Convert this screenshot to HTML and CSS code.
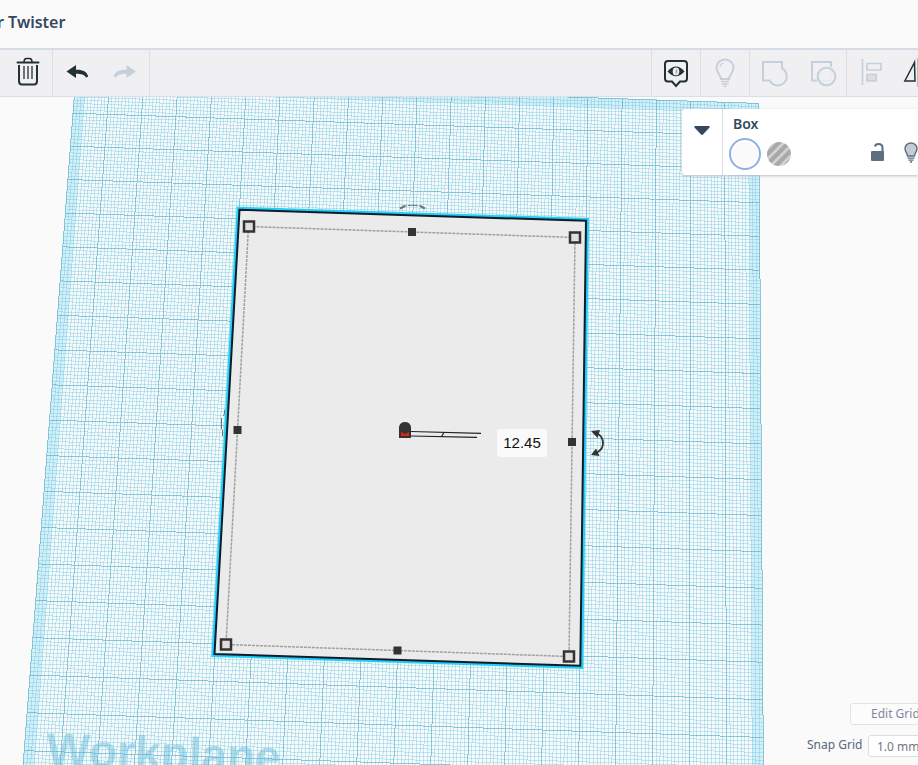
FILE: index.html
```html
<!DOCTYPE html>
<html lang="en">
<head>
<meta charset="utf-8">
<title>Workplane editor</title>
<link rel="stylesheet" href="styles.css">
</head>
<body>
<header class="header"><h1 class="title">r Twister</h1></header>
<nav class="toolbar" aria-label="Tools">
  <div class="group group-first">
    <button class="tool" aria-label="Delete"><svg viewBox="4 50 48 46"><g fill="none" stroke="#243132" stroke-width="2"><path d="M17.500 62.500H38.500" stroke-linecap="round"/><path d="M24 62C24 59.500 25 58.500 26.500 58.500H29.500C31 58.500 32 59.500 32 62" stroke-width="1.500"/><path d="M19 65V81Q19 84.500 22 84.500H34Q37 84.500 37 81V65"/><path d="M24 66V79M28 66V79M32 66V79" stroke-width="1.300"/></g></svg></button>
  </div>
  <div class="group">
    <button class="tool" aria-label="Undo"><svg viewBox="53 50 48 46"><path fill="#243132" d="M66.500 71.500L76 65V69.800C83 69.600 87.500 72 88.200 76.800L86 77.500C84.500 74.500 81 73.700 76 73.700V78Z"/></svg></button>
    <button class="tool" aria-label="Redo" disabled><svg viewBox="101 50 48 46"><path fill="#c5d0da" d="M136 71.500L126.500 65V69.800C119 69.600 114.500 72 113.800 76.800L116 77.500C117.500 74.500 121 73.700 126.500 73.700V78Z"/></svg></button>
  </div>
  <div class="spacer"></div>
  <div class="group group-start">
    <button class="tool" aria-label="Show"><svg viewBox="652 50 48 46"><path d="M668 61H684Q687 61 687 64V78.500Q687 81.500 684 81.500H680L676 86L672 81.500H668Q665 81.500 665 78.500V64Q665 61 668 61Z" fill="none" stroke="#243132" stroke-width="2"/><path d="M667.500 71.500Q676 61.500 684.500 71.500Q676 81 667.500 71.500Z" fill="#243132"/><ellipse cx="676" cy="71.400" rx="3.300" ry="3.900" fill="#f0f0f3"/><path d="M676.500 69.500V73.500" stroke="#9ba3a4" stroke-width="1.500"/></svg></button>
  </div>
  <div class="group">
    <button class="tool" aria-label="Show all" disabled><svg viewBox="701 50 48 46"><g fill="none" stroke="#c5d0da" stroke-width="2"><path d="M721 79C721 75 716.500 73 716.500 67.500A8.500 8 0 0 1 733.500 67.500C733.500 73 729 75 729 79Z"/><path d="M720 67Q720.500 64 723.500 63" stroke-width="1.200"/><path d="M721 81.500H729M721.500 84H728.500M723.500 86.300H726.500" stroke-width="1.500"/></g></svg></button>
  </div>
  <div class="group">
    <button class="tool" aria-label="Group" disabled><svg viewBox="750 50 48 46"><path d="M782 62H763V80.500H769.700A9 9 0 1 0 782 68.500Z" fill="none" stroke="#c5d0da" stroke-width="2"/></svg></button>
    <button class="tool" aria-label="Ungroup" disabled><svg viewBox="798 50 48 46"><g fill="none" stroke="#c5d0da" stroke-width="2"><path d="M831 67V62H812V80.500H817"/><circle cx="826.500" cy="76.500" r="8.800"/></g><path d="M831 69V80.500H819V72" fill="none" stroke="#c5d0da" stroke-opacity=".25"/></svg></button>
  </div>
  <div class="group group-last">
    <button class="tool" aria-label="Align" disabled><svg viewBox="847 50 48 46"><g fill="none" stroke="#c5d0da" stroke-width="1.700"><path d="M862.500 59V85"/><path d="M867 63.500H881V70H867Z"/><path d="M867 74.500H876.300V80.800H867Z" fill="#d9dfe6"/></g></svg></button>
    <button class="tool" aria-label="Mirror"><svg viewBox="895 50 48 46"><path d="M904.800 81L914.500 62.500L915 81Z" fill="none" stroke="#243132" stroke-width="1.500"/><path d="M918 58V87" stroke="#aaa" stroke-width="1.500"/><path d="M931 81L921.500 62.500V81Z" fill="#243132"/></svg></button>
  </div>
</nav>
<main class="scene">
  <svg class="view" viewBox="0 97 918 668" preserveAspectRatio="xMinYMin slice" role="img" aria-label="Box on the workplane">
    <g id="plane"></g>
    <text class="plane-name" transform="translate(46 765) rotate(1.900)">Workplane</text>
    <g fill="none" stroke="#6d7579" stroke-width="1"><path d="M403 206.500Q412 204 422 206.500" stroke-dasharray="4 1 10 1"/><path d="M400 208.500L405 206M420 206L425 208.500" stroke-width="2"/><path d="M224.500 410V413L223.500 416M221.500 418V429M222.500 430V436"/></g>
    <path class="glow" d="M239.500 209.800L586 220.800L580.300 665.800L214.500 654Z"/>
    <path class="face" d="M239.500 209.800L586 220.800L580.300 665.800L214.500 654Z"/>
    <path class="dashes" d="M248.500 226.500L575 237.500L569 656.500L226 644.500Z"/>
    <g class="corner">
      <rect x="244" y="221.500" width="10" height="10"/><rect x="570" y="232.500" width="10" height="10"/>
      <rect x="564" y="651.500" width="10" height="10"/><rect x="221" y="639.500" width="10" height="10"/>
    </g>
    <g fill="#333">
      <rect x="408" y="228" width="8" height="8"/><rect x="233.500" y="426" width="8" height="8"/>
      <rect x="568" y="438" width="8" height="8"/><rect x="393.500" y="646.500" width="8" height="8"/>
    </g>
    <path d="M411 431.500L481 433.300M411 436L477 437.300M444 432.500L441.500 436.500" stroke="#222" stroke-width="1.200"/>
    <path d="M399 438V427Q400 422 405 422T411 427V438Z" fill="#333"/>
    <path d="M401 432L405 434L409 432V436H401Z" fill="#d92514"/>
    <path d="M597 433.500Q603 436.500 603 443T597 452.500" fill="none" stroke="#333" stroke-width="1.800"/>
    <path d="M591 431L600 430L597.500 438ZM591 455L596 448.500L599.500 456Z" fill="#333"/>
  </svg>
  <input class="measure" aria-label="Height" value="12.45">
  <section class="panel" aria-label="Shape inspector">
    <button class="collapse" aria-label="Collapse"><svg width="16" height="9" viewBox="0 0 16 9"><path d="M1 0H15Q16 0 15.500 1.500L9 8.500Q8 9.300 7 8.500L.500 1.500Q0 0 1 0Z" fill="#344860"/></svg></button>
    <div class="details">
      <h2 class="shape-name">Box</h2>
      <div class="options">
        <button class="swatch" aria-label="Solid"></button>
        <button class="hole" aria-label="Hole"></button>
        <span class="spacer"></span>
        <button class="mini" aria-label="Lock"><svg width="16" height="20" viewBox="870 144 16 20"><path d="M875 146.500Q875.500 144 878.500 144Q882.500 144 882.500 148V152" fill="none" stroke="#5c6e80" stroke-width="2"/><rect x="871" y="151" width="13" height="10" rx="1" fill="#5c6e80"/></svg></button>
        <button class="mini bulb" aria-label="Hide"><svg width="16" height="20" viewBox="903 143 16 20"><path d="M907.500 155C907.500 152 905 151 905 147.500A6 5.500 0 0 1 917 147.500C917 151 914.500 152 914.500 155Z" fill="#c5ccd5" stroke="#5c6e80" stroke-width="1.400"/><path d="M907.500 157.200H914.500M908.500 159.200H913.500M910 161H912" stroke="#5c6e80" stroke-width="1.300"/></svg></button>
      </div>
    </div>
  </section>
  <div class="grid-settings">
    <button class="edit-grid">Edit Grid</button>
    <div class="snap"><label for="snap">Snap Grid</label><select id="snap"><option>1.0 mm</option></select></div>
  </div>
</main>
<script src="plane.js"></script>
</body>
</html>
```
FILE: styles.css
```css
* { box-sizing: border-box; }
body {
  margin: 0;
  min-height: 100vh;
  display: flex;
  flex-direction: column;
  overflow: hidden;
  background: #fafafa;
  color: #344860;
  font-family: "Noto Sans", "Open Sans", sans-serif;
}
button, input, select { margin: 0; padding: 0; border: 0; background: none; font: inherit; color: inherit; }
.header { height: 48px; display: flex; align-items: center; padding-bottom: 4px; }
.title { margin: 0 0 0 -3px; font-size: 16px; line-height: 24px; font-weight: 600; }
.toolbar { display: flex; overflow: hidden; background: #f0f0f3; border-top: 2px solid #d6dce5; border-bottom: 1px solid #dadfe5; }
.group { display: flex; flex: none; border-right: 1px solid #dadfe6; }
.group-first { padding-left: 4px; }
.group-start { border-left: 1px solid #dadfe6; }
.group-last { margin-right: -26px; }
.tool { width: 48px; height: 46px; flex: none; }
.tool svg { display: block; width: 48px; height: 46px; }
.spacer { flex: 1; }
.scene { position: relative; flex: 1; overflow: hidden; }
.view { position: absolute; inset: 0; width: 100%; height: 100%; }
.surface { fill: #f7fafb; }
.band { fill: #8edaf0; fill-opacity: .35; }
.minor { fill: none; stroke: #64bfdf; stroke-opacity: .36; shape-rendering: crispEdges; }
.major { fill: none; stroke: #3a9cc0; stroke-opacity: .55; shape-rendering: crispEdges; }
.plane-name { font: bold 46px "Liberation Sans", sans-serif; fill: #5cb9d8; fill-opacity: .45; }
.glow { fill: none; stroke: #1fd0f7; stroke-width: 6; }
.face { fill: #ebebeb; stroke: #0d1b2c; stroke-width: 2; }
.dashes { fill: none; stroke: #a0a0a0; stroke-width: 1.5; stroke-dasharray: 3 1; }
.corner { fill: #dedede; stroke: #333; stroke-width: 2.5; }
.measure {
  position: absolute;
  left: 497px;
  top: 332px;
  width: 50px;
  height: 28px;
  padding-bottom: 2px;
  border-radius: 3px;
  background: #fafafa;
  color: #111;
  text-align: center;
  font: 15px "Liberation Sans", sans-serif;
}
.panel {
  position: absolute;
  top: 12px;
  right: 0;
  width: 236px;
  display: flex;
  overflow: hidden;
  background: #fff;
  border-radius: 3px 0 0 3px;
  box-shadow: 0 1px 3px #b9bec6;
}
.collapse { width: 41px; border-right: 1px solid #d9dde4; display: flex; justify-content: center; align-items: flex-start; padding-top: 17px; }
.details { flex: 1; padding: 5px 0 3px 6px; }
.shape-name { margin: 0 0 0 4px; font-size: 14px; line-height: 20px; font-weight: 600; }
.options { display: flex; align-items: center; height: 36px; margin-top: 2px; }
.swatch { width: 32px; height: 32px; border: 2px solid #8db1e5; border-radius: 50%; background: #fafafa; box-shadow: inset 0 0 0 2px #fff; }
.hole { width: 24px; height: 24px; margin-left: 6px; border-radius: 50%; background: repeating-linear-gradient(135deg, #a9a9a9 0 4px, #d0d0d0 4px 7px); }
.mini { width: 16px; height: 24px; }
.bulb { margin: 0 -1px 0 17px; }
.mini svg { display: block; overflow: visible; }
.grid-settings { position: absolute; right: -52px; bottom: 8px; width: 163px; font-size: 12px; }
.edit-grid { display: block; width: 120px; height: 22px; margin: 0 0 10px 43px; padding: 0 0 2px 20px; text-align: left; border: 1px solid #e2e4e7; border-radius: 3px; color: #7b8a9c; background: #fcfcfc; }
.snap { display: flex; align-items: center; gap: 7px; white-space: nowrap; color: #56677b; }
.snap label { width: 54px; line-height: 20px; padding-bottom: 2px; }
.snap select { flex: 1; height: 22px; padding-left: 8px; appearance: none; border: 1px solid #dcdfe2; border-radius: 3px; background: #fff; color: #6f7880; }
```
FILE: plane.js
```js
// Corners of the workplane on screen: far left, far right, near right, near left.
const corners = [[75.5, 80.5], [758.8, 103.4], [763.7, 814], [21.3, 789]];
const size = 200;
const majorStep = 10;

// Projective mapping from the unit square to the corners.
const [[x0, y0], [x1, y1], [x2, y2], [x3, y3]] = corners;
const dx1 = x1 - x2, dx2 = x3 - x2, sx = x0 - x1 + x2 - x3;
const dy1 = y1 - y2, dy2 = y3 - y2, sy = y0 - y1 + y2 - y3;
const det = dx1 * dy2 - dx2 * dy1;
const g = (sx * dy2 - dx2 * sy) / det;
const h = (dx1 * sy - sx * dy1) / det;

function project(a, b) {
  const u = a / size, v = b / size, w = g * u + h * v + 1;
  const x = ((x1 - x0 + g * x1) * u + (x3 - x0 + h * x3) * v + x0) / w;
  const y = ((y1 - y0 + g * y1) * u + (y3 - y0 + h * y3) * v + y0) / w;
  return x.toFixed(2) + " " + y.toFixed(2);
}

const plane = document.getElementById("plane");

function addPath(name, d) {
  const path = document.createElementNS("http://www.w3.org/2000/svg", "path");
  path.setAttribute("class", name);
  path.setAttribute("d", d);
  plane.append(path);
}

function quad(a, b, c, d) {
  return `M${project(a, b)}L${project(c, b)}L${project(c, d)}L${project(a, d)}Z`;
}

addPath("surface", quad(0, 0, size, size));
addPath("band", quad(0, 0, 3, size));
addPath("band", quad(size - 3, 0, size, size));
addPath("band", quad(3, 0, size - 3, 3));

let minorRows = "", minorColumns = "", major = "";
for (let i = 0; i <= size; i++) {
  const column = `M${project(i, 0)}L${project(i, size)}`;
  const row = `M${project(0, i)}L${project(size, i)}`;
  if (i % majorStep === 0) {
    major += column + row;
  } else {
    minorColumns += column;
    minorRows += row;
  }
}
addPath("minor", minorColumns);
addPath("minor", minorRows);
addPath("major", major);
```
